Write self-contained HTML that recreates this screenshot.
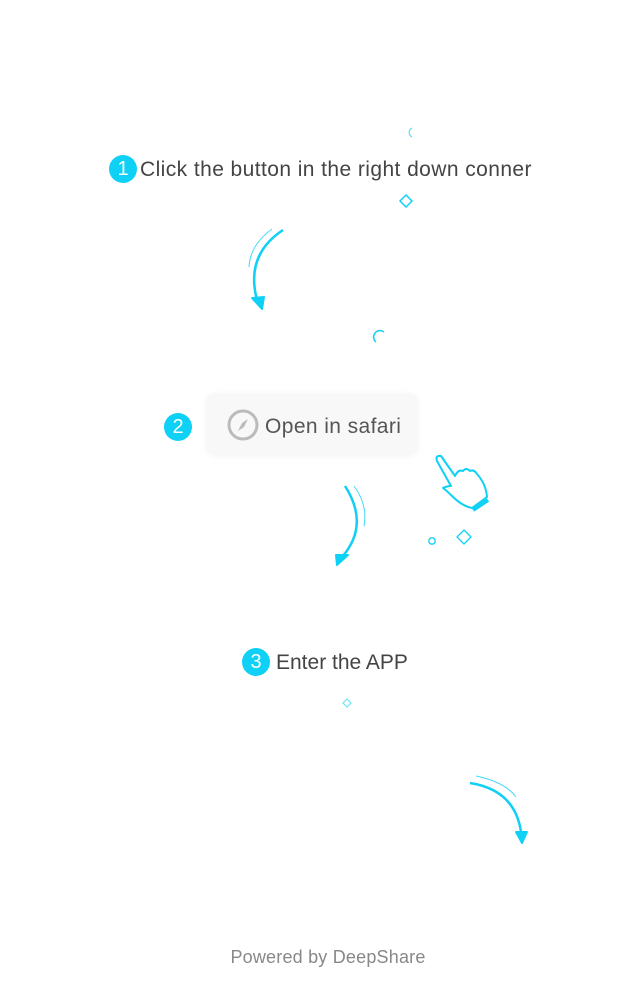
<!DOCTYPE html>
<html><head><meta charset="utf-8"><style>
body{margin:0;width:640px;height:1008px;background:#fff;position:relative;overflow:hidden;font-family:"Liberation Sans",sans-serif;}
.t{position:absolute;color:#444;font-size:21px;white-space:nowrap;}
.n{position:absolute;width:28px;height:28px;border-radius:50%;background:#0fd0f5;color:#fff;font-size:20px;text-align:center;line-height:28px;}
.btn{position:absolute;left:207px;top:393px;width:210px;height:60px;background:#f8f8f8;border-radius:8px;box-shadow:0 2px 8px rgba(0,0,0,0.06);}
svg{position:absolute;left:0;top:0;}
</style></head><body>
<div class="n" style="left:109px;top:155px">1</div>
<div class="t" style="left:140px;top:158px;letter-spacing:0.42px">Click the button in the right down conner</div>
<div class="btn"></div>
<div class="n" style="left:164px;top:413px">2</div>
<div class="t" style="left:265px;top:415px;color:#555;letter-spacing:0.4px">Open in safari</div>
<div class="n" style="left:242px;top:648px">3</div>
<div class="t" style="left:276px;top:651px">Enter the APP</div>
<div class="t" style="left:0;width:656px;text-align:center;top:947px;color:#888;font-size:18px;letter-spacing:0.2px">Powered by DeepShare</div>
<svg width="640" height="1008" fill="none" stroke="#0fd0f5">
<circle cx="243" cy="425" r="14" stroke="#bbb" stroke-width="3"/>
<path d="M248 419 L244 427 L238 431 L242 423 Z" fill="#bbb" stroke="none"/>
<path d="M412 128 A5 5 0 0 0 412 137" stroke-width="1.2" opacity=".7"/>
<path d="M406 195 L412 201 L406 207 L400 201 Z" stroke-width="1.5"/>
<path d="M384 332 A6 6 0 0 0 376 342" stroke-width="1.5"/>
<path d="M464 530 L471 537 L464 544 L457 537 Z" stroke-width="1.3"/>
<circle cx="432" cy="541" r="3.2" stroke-width="1.3"/>
<path d="M347 699 L351 703 L347 707 L343 703 Z" stroke-width="1.2" opacity=".6"/>
<path d="M283 230 Q245 255 257 300" stroke-width="2.5"/>
<path d="M272 229 Q250 245 249 267" stroke-width="1" opacity=".8"/>
<path d="M252 298 L264 297 L262 309 Z" fill="#0fd0f5" stroke-width="2" stroke-linejoin="round"/>
<path d="M345 486 Q370 525 342 557" stroke-width="2.5"/>
<path d="M354 486 Q368 505 364 526" stroke-width="1" opacity=".8"/>
<path d="M336 555 L348 555 L337 565 Z" fill="#0fd0f5" stroke-width="2" stroke-linejoin="round"/>
<path d="M470 783 Q515 790 521 832" stroke-width="2.5"/>
<path d="M476 776 Q505 782 516 797" stroke-width="1" opacity=".8"/>
<path d="M516 832 L527 832 L522 843 Z" fill="#0fd0f5" stroke-width="2" stroke-linejoin="round"/>
<path d="M437 461 Q435 455 441 456 L455 476 Q458 469 463 471 Q466 467 470 471 Q474 469 477 474 Q486 484 487 497 L472 508 Q462 506 452 496 Q447 491 443 488 Q447 486 451 486 Z" stroke-width="2" stroke-linejoin="round"/>
<path d="M473 510 L488 500" stroke-width="4"/>
</svg>
</body></html>
